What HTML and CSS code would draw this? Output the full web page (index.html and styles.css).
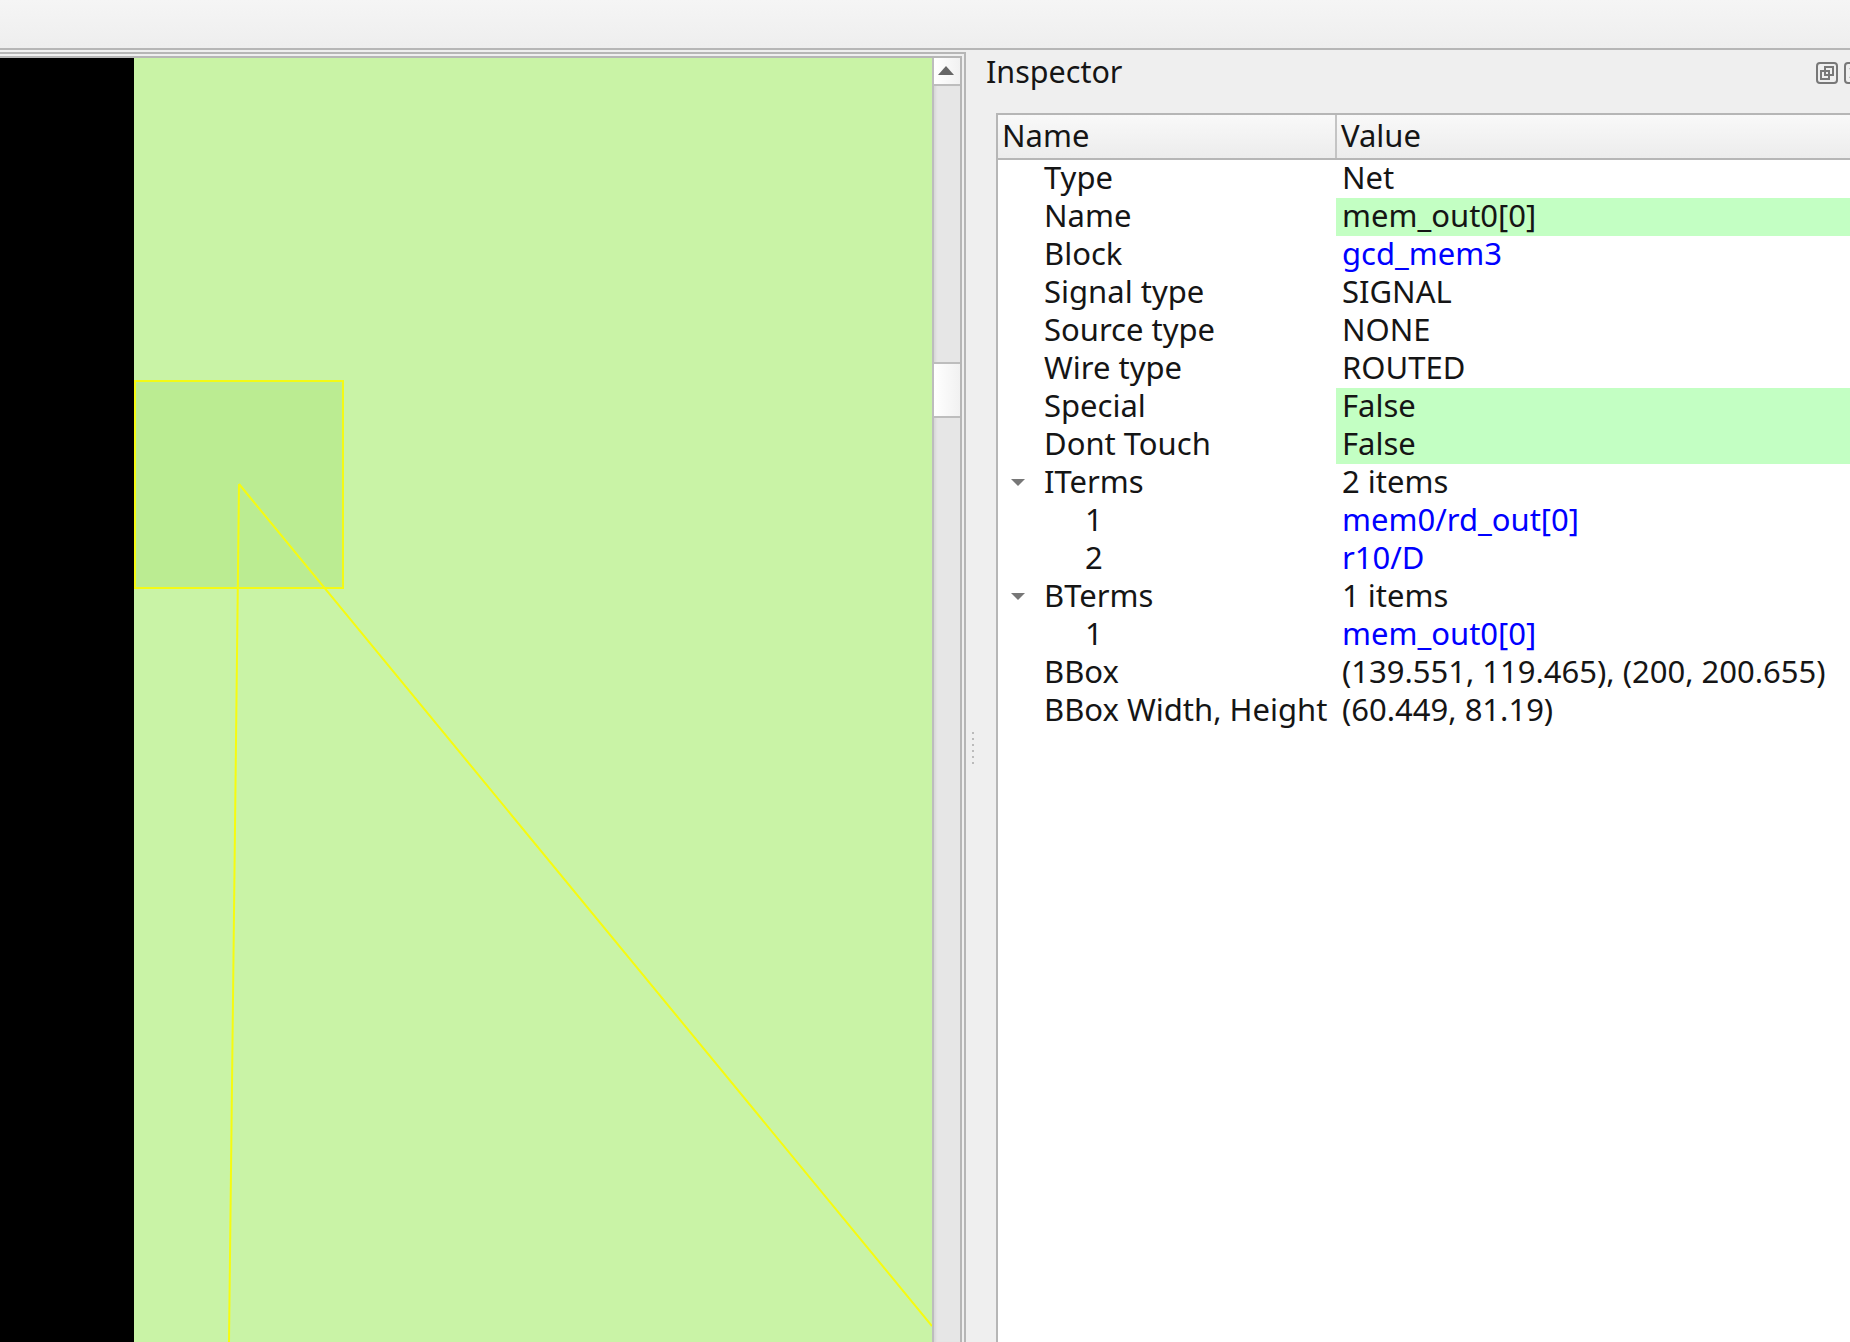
FILE: index.html
```html
<!DOCTYPE html>
<html lang="en">
<head>
  <meta charset="UTF-8" />
  <title>Inspector</title>
  <link rel="stylesheet" href="styles.css">
</head>
<body>

<div class="toolbar"></div>

<div class="main">
  <div class="viewDock">
    <div class="viewFrame">
      <div class="blackArea"></div>
      <div class="canvas">
        <svg class="layout" viewBox="134 58 798 1284" width="798" height="1284">
          <rect class="shape" x="135" y="381" width="208" height="207"/>
          <path class="flyline" d="M239 484 L229 1342 M239 484 L932 1326"/>
        </svg>
      </div>
      <div class="scrollbar">
        <div class="scrollBtn"><span class="arrowUp"></span></div>
        <div class="scrollTrack">
          <div class="scrollHandle"></div>
        </div>
      </div>
    </div>
  </div>

  <div class="splitter"><span></span><span></span><span></span><span></span><span></span><span></span></div>

  <div class="inspector">
    <div class="titleBar">
      <span class="title">Inspector</span>
      <div class="dockBtns">
        <svg class="dockBtn" viewBox="0 0 22 22">
          <rect x="1" y="1" width="20" height="20" rx="3"/>
          <rect x="9" y="5" width="8" height="8"/>
          <rect x="5" y="9" width="8" height="8"/>
        </svg>
        <svg class="dockBtn" viewBox="0 0 22 22">
          <rect x="1" y="1" width="20" height="20" rx="3"/>
          <path d="M6 6 L16 16 M16 6 L6 16"/>
        </svg>
      </div>
    </div>

    <div class="treeBox">
      <table class="tree">
        <colgroup><col class="nameCol"><col></colgroup>
        <thead>
          <tr><th>Name</th><th>Value</th></tr>
        </thead>
        <tbody>
          <tr><td class="lvl1">Type</td><td>Net</td></tr>
          <tr><td class="lvl1">Name</td><td class="edit">mem_out0[0]</td></tr>
          <tr><td class="lvl1">Block</td><td class="link">gcd_mem3</td></tr>
          <tr><td class="lvl1">Signal type</td><td>SIGNAL</td></tr>
          <tr><td class="lvl1">Source type</td><td>NONE</td></tr>
          <tr><td class="lvl1">Wire type</td><td>ROUTED</td></tr>
          <tr><td class="lvl1">Special</td><td class="edit">False</td></tr>
          <tr><td class="lvl1">Dont Touch</td><td class="edit">False</td></tr>
          <tr><td class="lvl1 open">ITerms</td><td>2 items</td></tr>
          <tr><td class="lvl2">1</td><td class="link">mem0/rd_out[0]</td></tr>
          <tr><td class="lvl2">2</td><td class="link">r10/D</td></tr>
          <tr><td class="lvl1 open">BTerms</td><td>1 items</td></tr>
          <tr><td class="lvl2">1</td><td class="link">mem_out0[0]</td></tr>
          <tr><td class="lvl1">BBox</td><td>(139.551, 119.465), (200, 200.655)</td></tr>
          <tr><td class="lvl1">BBox Width, Height</td><td>(60.449, 81.19)</td></tr>
        </tbody>
      </table>
    </div>
  </div>
</div>

</body>
</html>
```

FILE: styles.css
```css
html, body { margin: 0; height: 100%; overflow: hidden; }
body { display: flex; flex-direction: column; background: #efefef; color: #151515; font-family: "Noto Sans", sans-serif; font-size: 31px; line-height: 35px; }

.toolbar { flex: none; height: 48px; background: linear-gradient(#f5f5f5, #eeeeee); border-bottom: 2px solid #b6b6b6; }
.main { flex: 1; display: flex; min-height: 0; }

.viewDock { flex: none; width: 966px; box-sizing: border-box; margin-top: 2px; border-top: 2px solid #b6b6b6; border-right: 2px solid #b6b6b6; padding: 2px 2px 0 0; }
.viewFrame { display: flex; height: 100%; border-top: 2px solid #b6b6b6; border-right: 2px solid #b6b6b6; box-sizing: border-box; }
.blackArea { flex: none; width: 134px; background: #000; }
.canvas { flex: 1; position: relative; overflow: hidden; background: #c9f3a6; }
.layout { display: block; }
.shape { fill: #bbec92; stroke: #f3fa14; stroke-width: 2; }
.flyline { fill: none; stroke: #f6fb10; stroke-width: 2; }

.scrollbar { flex: none; width: 28px; display: flex; flex-direction: column; background: #e6e6e6; border-left: 2px solid #bdbdbd; box-sizing: border-box; }
.scrollBtn { flex: none; height: 26px; display: flex; align-items: center; justify-content: center; background: linear-gradient(90deg, #ffffff, #f1f1f1); border-bottom: 2px solid #bdbdbd; }
.arrowUp { width: 0; height: 0; margin: 0 2px 2px 0; border-left: 8px solid transparent; border-right: 8px solid transparent; border-bottom: 9px solid #666; }
.scrollTrack { flex: 1; padding-top: 276px; box-shadow: inset 3px 0 2px -1px #d9d9d9; }
.scrollHandle { height: 52px; background: linear-gradient(90deg, #ffffff, #f1f1f1); border-top: 2px solid #bdbdbd; border-bottom: 2px solid #bdbdbd; }

.splitter { flex: none; width: 18px; display: flex; flex-direction: column; align-items: center; justify-content: center; gap: 4px; padding: 104px 4px 0 0; box-sizing: border-box; }
.splitter span { width: 2px; height: 2px; background: #bbbbbb; }

.inspector { flex: 1; min-width: 0; display: flex; flex-direction: column; }
.titleBar { flex: none; height: 63px; box-sizing: border-box; padding: 0 0 21px 2px; display: flex; align-items: center; justify-content: space-between; }
.title { font-size: 30.5px; }
.dockBtns { display: flex; gap: 6px; margin: 4px -16px 0 0; }
.dockBtn { flex: none; width: 22px; height: 22px; fill: none; stroke: #787878; stroke-width: 2; }

.treeBox { flex: 1; margin: 0 -20px 0 12px; background: #fff; border: 2px solid #b6b6b6; border-bottom: 0; overflow: hidden; }
.tree { width: 100%; table-layout: fixed; border-collapse: collapse; }
.nameCol { width: 338px; }
.tree th { height: 40px; padding: 0 0 3px 4px; font-weight: normal; text-align: left; background: linear-gradient(#f9f9f9, #ececec); border-bottom: 2px solid #b6b6b6; }
.tree th:first-child { border-right: 2px solid #c4c4c4; }
.tree td { height: 35px; padding: 0 0 3px 6px; white-space: nowrap; }
.tree td.lvl1 { padding-left: 46px; position: relative; }
.tree td.lvl2 { padding-left: 87px; }
.tree td.edit { background: #c3ffc3; }
.tree td.link { color: #0000ff; }

.open::before { content: ""; position: absolute; left: 13px; top: 15px; width: 0; height: 0; border-left: 7px solid transparent; border-right: 7px solid transparent; border-top: 7px solid #777; }
```
